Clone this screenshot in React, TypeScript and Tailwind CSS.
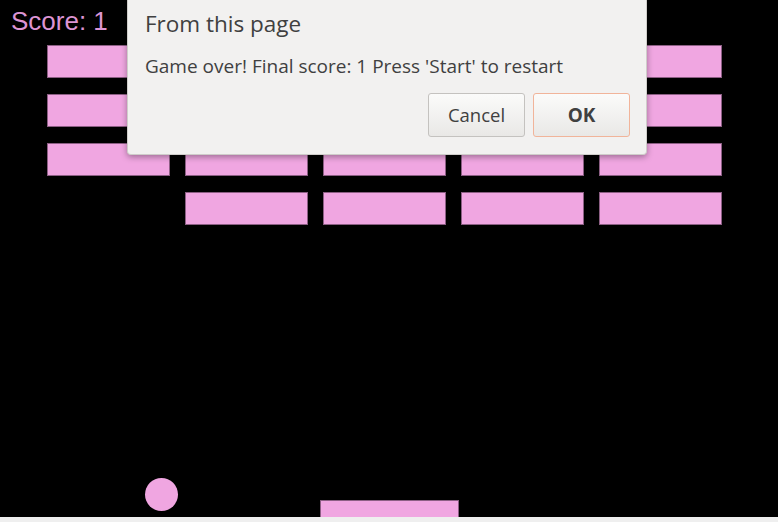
import React from "react";

const ROWS: boolean[][] = [
  [true, true, true, true, true],
  [true, true, true, true, true],
  [true, true, true, true, true],
  [false, true, true, true, true],
];

export default function App() {
  return (
    <div className="relative h-[522px] w-[778px] overflow-hidden bg-[#efefef]">
      <div className="relative h-[517px] w-full bg-black">
        <div
          className="absolute left-[11px] top-[4px] text-[26px] leading-[34px] text-[#dc94d3]"
          style={{ fontFamily: '"Liberation Sans", Arial, sans-serif' }}
        >
          Score: 1
        </div>
        <div className="absolute left-[47px] top-[45px] flex flex-col gap-[16px]">
          {ROWS.map((row, ri) => (
            <div key={ri} className="flex gap-[15px]">
              {row.map((on, ci) => (
                <div
                  key={ci}
                  className={
                    on
                      ? "h-[33px] w-[123px] border border-[#8c5f84] bg-[#f0a6e1]"
                      : "h-[33px] w-[123px]"
                  }
                />
              ))}
            </div>
          ))}
        </div>
        <div className="absolute left-[145px] top-[478px] h-[33px] w-[33px] rounded-full bg-[#f0a6e1]" />
        <div className="absolute left-[320px] top-[500px] h-[17px] w-[139px] border border-b-0 border-[#8c5f84] bg-[#f0a6e1]" />
      </div>

      <div
        className="absolute left-[127px] top-0 flex h-[155px] w-[520px] flex-col rounded-b-[4px] border border-t-0 border-[#cfcdca] bg-[#f2f1f0] pl-[17px] pr-[16px] pt-[9px] text-[#404040] shadow-[0_2px_6px_rgba(0,0,0,0.35)]"
        style={{ fontFamily: '"Open Sans", "Noto Sans", sans-serif' }}
      >
        <div className="text-[22.5px] leading-[30px]">From this page</div>
        <div className="mt-[14px] text-[19px] leading-[26px]">
          Game over! Final score: 1 Press 'Start' to restart
        </div>
        <div className="mt-[14px] flex justify-end gap-[8px]">
          <button className="h-[44px] w-[97px] rounded-[3px] border border-[#c4c2bf] bg-gradient-to-b from-[#fbfbfa] to-[#e9e8e6] text-[18.5px] text-[#404040]">
            Cancel
          </button>
          <button className="h-[44px] w-[97px] rounded-[3px] border border-[#f1b49a] bg-gradient-to-b from-[#fbfbfa] to-[#e9e8e6] text-[19px] font-bold text-[#404040]">
            OK
          </button>
        </div>
      </div>
    </div>
  );
}
